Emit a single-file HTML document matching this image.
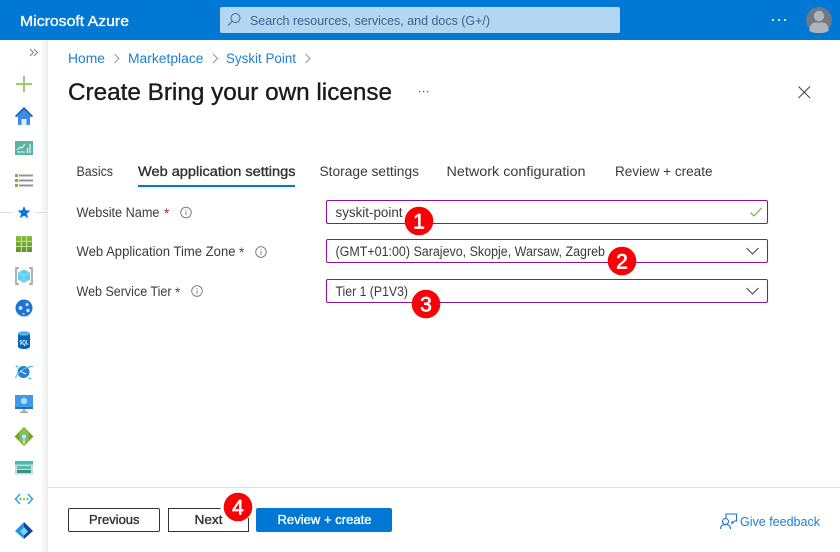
<!DOCTYPE html>
<html><head><meta charset="utf-8"><title>Create Bring your own license</title>
<style>
html,body{margin:0;padding:0;background:#fff;width:840px;height:552px;overflow:hidden}
svg{display:block}
text{font-family:"Liberation Sans",sans-serif;font-size:13.5px;fill:#3b3a39}
.sb{stroke-width:.35px}
</style></head><body>
<svg xmlns="http://www.w3.org/2000/svg" width="840" height="552" viewBox="0 0 840 552">
<defs>
<linearGradient id="sh" x1="0" x2="1" y1="0" y2="0"><stop offset="0" stop-color="#fff"/><stop offset="1" stop-color="#ececec"/></linearGradient>
<linearGradient id="gr" x1="0" x2="0" y1="0" y2="1"><stop offset="0" stop-color="#86c23a"/><stop offset="1" stop-color="#5e9624"/></linearGradient>
</defs>
<rect width="840" height="552" fill="#fff"/>
<rect x="40" y="40" width="8" height="512" fill="url(#sh)"/>
<rect width="840" height="40" fill="#0078d4"/>
<text x="20" y="26" class="sb" stroke="#fff" textLength="109" lengthAdjust="spacingAndGlyphs" style="font-size:15px;fill:#fff">Microsoft Azure</text>
<rect x="220" y="7" width="400" height="26" rx="2" fill="#b3d7f3"/>
<g fill="none" stroke="#3c6a92" stroke-width="1"><circle cx="235.500" cy="18" r="4.500"/><path d="M232.200 21.300L228 25.500"/></g>
<text x="250" y="25" textLength="240" lengthAdjust="spacingAndGlyphs" style="font-size:13px;fill:#3a6288">Search resources, services, and docs (G+/)</text>
<g fill="#d9ecfa"><rect x="772" y="19" width="2" height="2"/><rect x="778" y="19" width="2" height="2"/><rect x="784" y="19" width="2" height="2"/></g>
<circle cx="819" cy="20" r="13" fill="#6e7a87"/>
<circle cx="819" cy="16" r="5.200" fill="#aeb4ba"/>
<path d="M809.500 31c-.6-5 2.500-8.500 5.500-8.500h8c3 0 6.100 3.500 5.500 8.500-2.500 1.700-5.600 2-9.500 2s-7-.3-9.500-2z" fill="#aeb4ba"/>

<path d="M30 49l3.500 3.500L30 56M34 49l3.500 3.500L34 56" fill="none" stroke="#777" stroke-width=".9"/>
<path d="M24 76v16M16 84h16" stroke="#9ccb70" stroke-width="2" fill="none"/>
<path d="M24 107.500L15.500 116l1 1.200 1.500-1V125h12v-8.800l1.500 1 1-1.200z" fill="#3e8ae6"/>
<path d="M15.500 116.500L24 108l8.500 8.500" fill="none" stroke="#0f5ea8" stroke-width="1.500"/>
<rect x="21.500" y="119" width="5" height="6" fill="#dfe9f2"/>
<rect x="15" y="141" width="18" height="14" fill="#5bb5a5"/>
<path d="M17 150l3-3 2 1 3-4M17 152h8" stroke="#e4f4f1" stroke-width="1.100" fill="none"/>
<path d="M27.500 153v-5M30 153v-9" stroke="#e4f4f1" stroke-width="1.300"/>
<g fill="#7fb33d"><rect x="15" y="174" width="3" height="3"/><rect x="15" y="179" width="3" height="3"/><rect x="15" y="184" width="3" height="3"/></g>
<g fill="#949494"><rect x="19" y="174.500" width="14" height="2"/><rect x="19" y="179.500" width="14" height="2"/><rect x="19" y="184.500" width="14" height="2"/></g>
<path d="M0 212.500h13M35 212.500h13" stroke="#dedede"/>
<path d="M24 206l1.800 4.300 4.700.3-3.600 3 1.200 4.600-4.100-2.500-4.100 2.500 1.200-4.600-3.600-3 4.700-.3z" fill="#0b78d8"/>
<rect x="16" y="236" width="16" height="16" fill="url(#gr)"/>
<path d="M21.300 236v16M26.600 236v16M16 241.300h16M16 246.600h16" stroke="#d2e3b8" stroke-width=".9"/>
<path d="M19 268h-3v16h3M29 268h3v16h-3" fill="none" stroke="#9a9a9a" stroke-width="1.500"/>
<path d="M24 269.500l6 3v7l-6 3.500-6-3.500v-7z" fill="#5cd0f5"/>
<path d="M18 272.500l6 3 6-3M24 275.500V283" stroke="#9fe6fa" stroke-width=".7" fill="none"/>
<circle cx="24" cy="308" r="8.500" fill="#1f74d0"/>
<circle cx="20.500" cy="308" r="1.900" fill="#cfe4f7"/><circle cx="27" cy="304.500" r="1.500" fill="#cfe4f7"/><circle cx="28" cy="310.500" r="1.700" fill="#cfe4f7"/><circle cx="23.500" cy="314" r="1.200" fill="#8fc0ee"/>
<path d="M18 333.500v13c0 1.500 3 2.500 6 2.500s6-1 6-2.500v-13z" fill="#0067b8"/>
<ellipse cx="24" cy="333.500" rx="6" ry="2.300" fill="#53b0ee"/>
<text x="19.500" y="344.500" font-weight="bold" textLength="9" lengthAdjust="spacingAndGlyphs" style="font-size:6px;fill:#fff">SQL</text>
<circle cx="23.500" cy="372" r="6" fill="#2b7cd3"/>
<path d="M16 378c-1-2 4-7 8-9 4-2 8-3 9-2" fill="none" stroke="#50c7ee" stroke-width="1.200"/>
<path d="M20 371l6 3" stroke="#d8ecfa" stroke-width="1.200"/>
<path d="M17 365v3M15.500 366.500h3M30 377v3M28.500 378.500h3" stroke="#50c7ee" stroke-width=".9"/>
<rect x="15" y="395" width="18" height="12" fill="#3f9be8"/>
<rect x="15" y="407" width="18" height="2" fill="#1f74c8"/>
<path d="M22.500 409h3l.5 3h-4z" fill="#b5b5b5"/><rect x="20" y="411.500" width="8" height="1.500" fill="#a5a5a5"/>
<path d="M24 397.500l3 1.600v3.600l-3 1.800-3-1.800v-3.600z" fill="#a5def6"/>
<path d="M24 427l9.500 9.500L24 446l-9.500-9.500z" fill="#74a824"/>
<path d="M24 428.500l4.500 4.500v7L24 444.500l-4.500-4.500v-7z" fill="#8cc63f"/>
<circle cx="24" cy="436.500" r="2.600" fill="#d9e9fb" stroke="#5ea0ef"/>
<path d="M24 439v5" stroke="#e6f0d8" stroke-width="1.300"/>
<rect x="15" y="461" width="18" height="3.500" fill="#37c2b1"/>
<rect x="15" y="464.500" width="18" height="10" fill="#d6d6d6"/>
<rect x="17" y="466" width="14" height="3" fill="#5bbcae"/><rect x="17" y="470" width="14" height="3" fill="#3a8f86"/>
<path d="M20 494l-4.500 5 4.500 5M28 494l4.500 5-4.500 5" fill="none" stroke="#28a8ea" stroke-width="1.500"/>
<g fill="#86c23a"><circle cx="20.500" cy="499" r="1.100"/><circle cx="24" cy="499" r="1.100"/><circle cx="27.500" cy="499" r="1.100"/></g>
<path d="M24 522l9 9-9 8z" fill="#15478f"/>
<path d="M24 522l-9 9 9 8z" fill="#1f96df"/>
<path d="M24 527l4 4.500-4 4-4-4z" fill="#7fd0f5"/>

<text x="68" y="63" textLength="37" lengthAdjust="spacingAndGlyphs" style="fill:#1c7fd2">Home</text>
<text x="128" y="63" textLength="75.500" lengthAdjust="spacingAndGlyphs" style="fill:#1c7fd2">Marketplace</text>
<text x="226" y="63" textLength="70" lengthAdjust="spacingAndGlyphs" style="fill:#1c7fd2">Syskit Point</text>
<path d="M114.500 54l4.500 4.500-4.500 4.500M213 54l4.500 4.500-4.500 4.500M305.500 54l4.500 4.500-4.500 4.500" fill="none" stroke="#777" stroke-width=".8"/>
<text x="68" y="100" textLength="324" lengthAdjust="spacingAndGlyphs" class="sb" stroke="#1b1a19" style="font-size:24px;fill:#1b1a19">Create Bring your own license</text>
<g fill="#605e5c"><rect x="419" y="91" width="1.300" height="1.300"/><rect x="423" y="91" width="1.300" height="1.300"/><rect x="427" y="91" width="1.300" height="1.300"/></g>
<path d="M798.500 86.500l11.500 11.500M810 86.500L798.500 98" stroke="#444" stroke-width="1"/>

<text x="76.500" y="176" textLength="36.500" lengthAdjust="spacingAndGlyphs">Basics</text>
<text x="138" y="176" textLength="157.500" class="sb" stroke="#323130" lengthAdjust="spacingAndGlyphs" style="fill:#323130">Web application settings</text>
<text x="319.500" y="176" textLength="99.500" lengthAdjust="spacingAndGlyphs">Storage settings</text>
<text x="446.500" y="176" textLength="139" lengthAdjust="spacingAndGlyphs">Network configuration</text>
<text x="615" y="176" textLength="97.500" lengthAdjust="spacingAndGlyphs">Review + create</text>
<rect x="138" y="185" width="157" height="2" fill="#0078d4"/>

<text x="76.500" y="217" textLength="83" lengthAdjust="spacingAndGlyphs">Website Name</text>
<text x="164" y="218" style="fill:#a4262c">*</text>
<text x="76.500" y="256" textLength="159" lengthAdjust="spacingAndGlyphs">Web Application Time Zone</text>
<text x="239" y="257" style="fill:#a4262c">*</text>
<text x="76.500" y="296" textLength="95" lengthAdjust="spacingAndGlyphs">Web Service Tier</text>
<text x="175" y="297" style="fill:#a4262c">*</text>
<g fill="none" stroke="#777" stroke-width=".9">
<circle cx="186" cy="212.500" r="5.300"/><circle cx="261" cy="252" r="5.300"/><circle cx="197" cy="291" r="5.300"/>
<path d="M186 211.500v3.800M261 251v3.800M197 290v3.800"/>
<path d="M186 209.500v1M261 249v1M197 288v1"/>
</g>

<g fill="#fff" stroke="#881798" stroke-width="1.100">
<rect x="326.500" y="200.500" width="441" height="23" rx="1.500"/>
<rect x="326.500" y="239.500" width="441" height="23" rx="1.500"/>
<rect x="326.500" y="279.500" width="441" height="23" rx="1.500"/>
</g>
<text x="335.500" y="217" textLength="67" lengthAdjust="spacingAndGlyphs">syskit-point</text>
<text x="335.500" y="256" textLength="269.500" lengthAdjust="spacingAndGlyphs">(GMT+01:00) Sarajevo, Skopje, Warsaw, Zagreb</text>
<text x="335.500" y="296" textLength="72.500" lengthAdjust="spacingAndGlyphs">Tier 1 (P1V3)</text>
<path d="M750.500 212.500l3.500 3.500 7.500-8" fill="none" stroke="#6bb33a" stroke-width="1.200"/>
<path d="M746.500 248l6 6 6-6M746.500 288l6 6 6-6" fill="none" stroke="#444" stroke-width="1"/>

<g fill="#fb0007"><circle cx="419" cy="221" r="14.300"/><circle cx="622" cy="261" r="14.300"/><circle cx="426" cy="304" r="14.300"/><circle cx="238" cy="507" r="14.300"/></g>
<g stroke="#fff" stroke-width=".7">
<text x="419" y="228.500" text-anchor="middle" style="font-size:21px;fill:#fff">1</text>
<text x="622" y="268.500" text-anchor="middle" style="font-size:21px;fill:#fff">2</text>
<text x="426" y="311.500" text-anchor="middle" style="font-size:21px;fill:#fff">3</text>
<text x="238" y="514.500" text-anchor="middle" style="font-size:21px;fill:#fff">4</text>
</g>

<rect x="48" y="487" width="792" height="1" fill="#e1dfdd"/>
<rect x="68.500" y="508.500" width="91" height="23" rx="1.500" fill="#fff" stroke="#333" stroke-width="1"/>
<path d="M248.500 518v13.500h-80v-23h52" fill="none" stroke="#333" stroke-width="1"/>
<rect x="256" y="508" width="136" height="24" rx="2" fill="#0078d4"/>
<text x="89" y="524" textLength="50.500" class="sb" stroke="#323130" lengthAdjust="spacingAndGlyphs" style="font-size:12.500px;fill:#323130">Previous</text>
<text x="194.500" y="524" textLength="28" class="sb" stroke="#323130" lengthAdjust="spacingAndGlyphs" style="font-size:12.500px;fill:#323130">Next</text>
<text x="277.500" y="524" textLength="94" class="sb" stroke="#fff" lengthAdjust="spacingAndGlyphs" style="font-size:12.500px;fill:#fff">Review + create</text>
<g fill="none" stroke="#1a73d0" stroke-width="1.100">
<path d="M726 519v-5h10.500v7h-2l-2.500 2.500v-2.500"/>
<circle cx="725.500" cy="521.500" r="3"/>
<path d="M720.500 529c0-3 2-4.500 5-4.500s5 1.500 5 4.500"/>
</g>
<text x="740" y="526" textLength="80" lengthAdjust="spacingAndGlyphs" style="font-size:13px;fill:#1c7fd2">Give feedback</text>
</svg>
</body></html>
